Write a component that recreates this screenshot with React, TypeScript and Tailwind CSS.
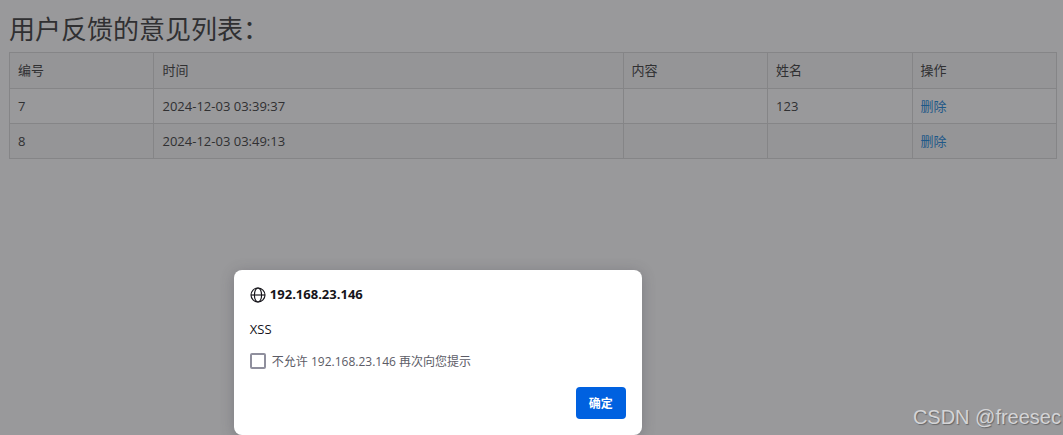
import { useState } from "react";

type Feedback = { id: number; time: string; content: string; name: string };

const rows: Feedback[] = [
  { id: 7, time: "2024-12-03 03:39:37", content: "", name: "123" },
  { id: 8, time: "2024-12-03 03:49:13", content: "", name: "" },
];

const heading = "border border-[#858587] px-2 pb-0.5 text-left font-normal";
const cell = "border border-[#858587] px-2";

function FeedbackTable() {
  return (
    <table className="w-full table-fixed border-collapse text-[13px] leading-5">
      <colgroup>
        <col className="w-[13.8%]" />
        <col className="w-[44.8%]" />
        <col className="w-[13.8%]" />
        <col className="w-[13.8%]" />
        <col className="w-[13.8%]" />
      </colgroup>
      <thead>
        <tr className="h-9 bg-[#959597]">
          <th className={heading}>编号</th>
          <th className={heading}>时间</th>
          <th className={heading}>内容</th>
          <th className={heading}>姓名</th>
          <th className={heading}>操作</th>
        </tr>
      </thead>
      <tbody>
        {rows.map((row) => (
          <tr key={row.id} className="h-[35px] even:bg-[#959597]">
            <td className={cell}>{row.id}</td>
            <td className={cell}>{row.time}</td>
            <td className={cell}>{row.content}</td>
            <td className={cell}>{row.name}</td>
            <td className={cell}>
              <a href="#delete" className="text-[#1f5888]">
                删除
              </a>
            </td>
          </tr>
        ))}
      </tbody>
    </table>
  );
}

function GlobeIcon() {
  return (
    <svg
      viewBox="0 0 16 16"
      className="size-4 shrink-0"
      fill="none"
      stroke="currentColor"
      strokeWidth="1.15"
      aria-hidden="true"
    >
      <circle cx="8" cy="8" r="7" />
      <ellipse cx="8" cy="8" rx="3.6" ry="7" />
      <path d="M1 8h14" />
    </svg>
  );
}

function AlertDialog() {
  const [blocked, setBlocked] = useState(false);
  return (
    <div
      role="dialog"
      aria-labelledby="dialog-title"
      className="absolute bottom-0 left-[22%] flex w-102 flex-col rounded-lg bg-white p-4 text-xs text-[#15141a] shadow-[0_2px_14px_rgba(58,57,68,0.3)]"
    >
      <h2 id="dialog-title" className="flex h-[17px] items-center gap-1 text-[13px] font-bold">
        <GlobeIcon />
        192.168.23.146
      </h2>
      <p className="mt-4 text-[13px] leading-5">XSS</p>
      <label className="mt-3 flex h-5 items-center gap-1.5 text-[#5b5b66]">
        <input
          type="checkbox"
          checked={blocked}
          onChange={(e) => setBlocked(e.target.checked)}
          className="size-4 appearance-none rounded-xs border-2 border-[#8f8f9d] bg-white checked:bg-[#0061e0]"
        />
        <span className="pt-0.5">不允许 192.168.23.146 再次向您提示</span>
      </label>
      <button
        type="button"
        className="mt-4 h-8 self-end rounded bg-[#0061e0] px-[13px] pt-0.5 font-bold text-white"
      >
        确定
      </button>
    </div>
  );
}

export default function App() {
  return (
    <div className="relative min-h-screen overflow-hidden bg-[#99999b] font-['Open_Sans','Noto_Sans_CJK_SC',sans-serif] text-[#303032]">
      <main className="pt-[9px] pr-1.5 pl-[9px]">
        <h1 className="mb-[3px] text-[26px] leading-10 font-normal">用户反馈的意见列表：</h1>
        <FeedbackTable />
      </main>
      <AlertDialog />
      <span className="absolute right-0.5 bottom-1 font-['Liberation_Sans',sans-serif] text-[20px] leading-7 text-[#d4d4d6] [text-shadow:1px_1px_1px_#666668]">
        CSDN @freesec
      </span>
    </div>
  );
}
